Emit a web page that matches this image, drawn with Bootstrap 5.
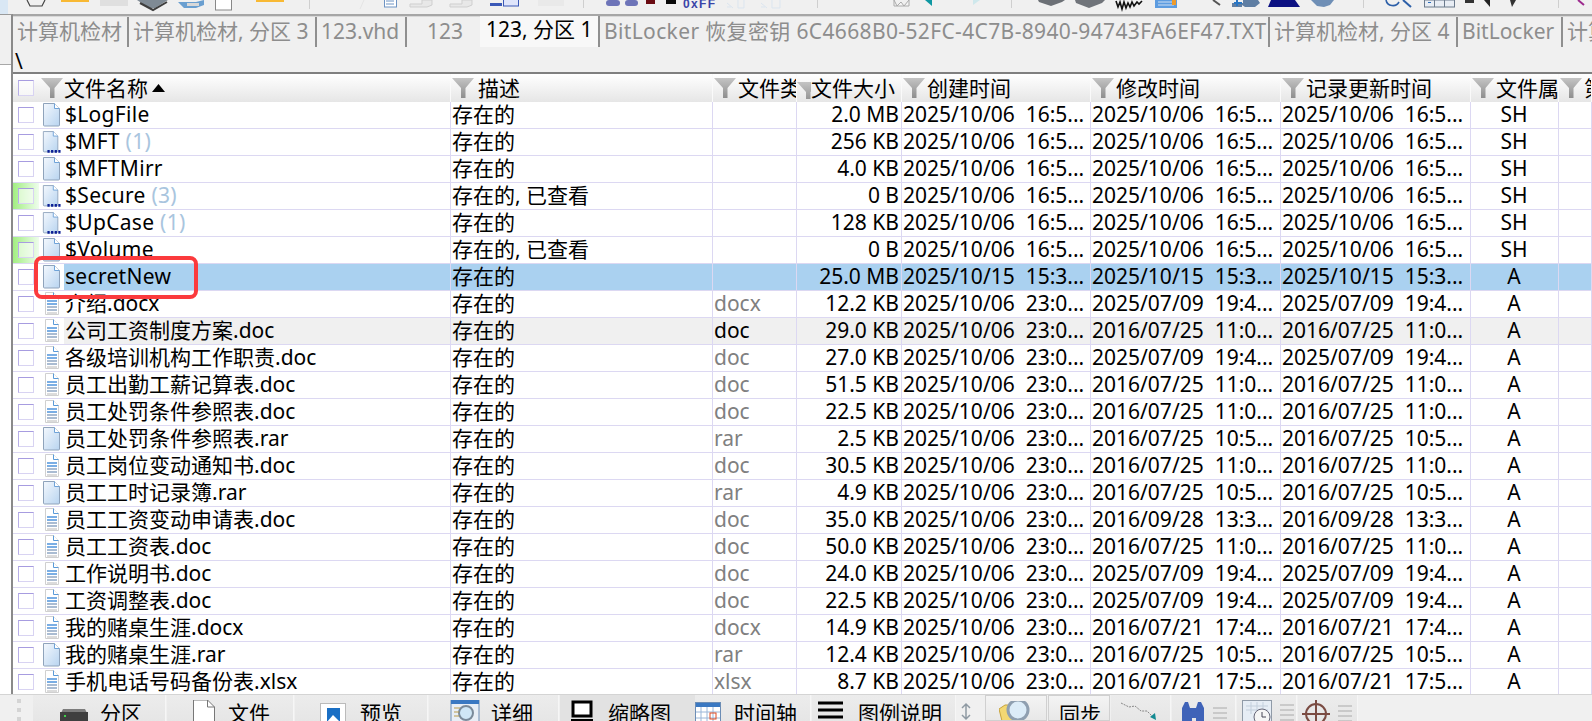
<!DOCTYPE html>
<html lang="zh"><head><meta charset="utf-8"><title>X-Ways</title>
<link href="https://cdn.jsdelivr.net/npm/bootstrap@5.3.0/dist/css/bootstrap.min.css" rel="stylesheet">
<style>
html,body{margin:0;height:721px;overflow:hidden}
body{background:#f0f0f0;font:21px/26px "Noto Sans","Noto Sans CJK SC",sans-serif;color:#000;width:1592px;position:relative}
.tool-strip{height:14px;overflow:hidden;background:#f0f0f0;flex:none}
.tool-strip svg{display:block}
.mid{height:680px;flex:none}
.rail{width:13px;flex:none;border-right:2px solid #8a8a8a;border-top:1px solid #9a9a9a;display:flex;flex-direction:column}
.rail-top{height:50px;background:#f0f0f0;border-bottom:1px solid #a8a8a8}
.rail-low{flex:1;background:#fff}
.main-col{width:1579px;flex:none;overflow:hidden}
.tabs-row{height:33px;border-top:2px solid #a6a6a6;position:relative;box-shadow:inset 0 1px 0 #d8d8d8;white-space:nowrap;overflow:hidden}
.tb{height:30px;margin-top:1px;color:#8d8d8d;line-height:29px;overflow:hidden;flex:none;text-align:left;border-right:2px solid #8f8f8f;padding-left:4px}
.tb1{width:116px}.tb2{width:188px}.tb3{width:90px}.tb4{width:73px;border-right:0;padding-left:20px}
.tb5{width:120px;color:#000;background:#f8f8f8;height:32px;margin-top:-1px;border-right:2px solid #8f8f8f;line-height:29px;padding-left:6px}
.tb6{width:670px;letter-spacing:.36px}.tb7{width:188px}.tb8{width:105px}.tb9{width:60px;border-right:0}
.path-row{height:25px;line-height:28px;padding-left:2px;flex:none}
.grid-wrap{height:623px;border-top:2px solid #7f7f7f;overflow:hidden;width:1579px;background:#fff}
table.ftable{table-layout:fixed;width:1579px;border-collapse:separate;border-spacing:0;margin:0}
.c1{width:438px}.c2{width:262px}.c3{width:84px}.c4{width:105px}.c5{width:189px}.c6{width:190px}.c7{width:190px}.c8{width:88px}.c9{width:33px}
table.ftable>thead>tr>th{height:28px;padding:0;font-weight:400;white-space:nowrap;overflow:hidden;background:linear-gradient(#fff,#e6e6e6);border-right:1px solid #fafafa;vertical-align:middle}
.th-in{height:28px;display:flex;align-items:center}
.fun{width:22px;height:22px;flex:none;margin:0 2px 0 1px}
th:nth-child(1) .fun{margin-right:1px}
th:nth-child(2) .fun{margin-right:4px}
.fun-clip{width:14px;flex:none;overflow:hidden;height:22px}
.fun-clip .fun{margin:0}
.sort-tri{width:13px;height:8px;margin-left:4px;flex:none}
.chk{width:16px;height:16px;flex:none;border:1px solid #b7aee8;border-top-color:#a79ce0;border-right-color:#d8d3f2;border-bottom-color:#d8d3f2;background:rgba(255,255,255,.55);display:block}
table.ftable>tbody>tr>td{height:27px;padding:0 2px 0 1px;border-bottom:1px solid #dcd8f2;border-right:1px solid #dcd8f2;background:#fff;white-space:pre;overflow:hidden;vertical-align:middle;line-height:25px}
table.ftable>tbody>tr>td.cell-name{padding:0}
.name-in{height:26px;display:flex;align-items:stretch}
.chk-box{width:26px;padding-left:5px;flex:none;display:flex;align-items:center}
.th-chk{width:27px;padding-left:5px;flex:none;display:flex;align-items:center}
.ico-box{width:25px;flex:none;padding-left:3px;display:flex;align-items:center}
.ico{width:19px;height:25px;display:block}
.nm{flex:1;padding-left:1px;overflow:hidden}
tbody tr:nth-child(-n+7) .nm{letter-spacing:.3px}
.cnt{color:#a9c5de}
.seen .chk-box{background:linear-gradient(90deg,#a2ee82,#effded)}
.ty{color:#808080}
table.ftable>tbody>tr.sel>td{background:#aad1f0}
table.ftable>tbody>tr.sel>td.cell-name{background:#fff}
tr.sel .nm{background:#aad1f0}
table.ftable>tbody>tr.hov>td{background:#f0f0f0}
table.ftable>tbody>tr.hov>td.cell-name{background:#fff}
tr.hov .nm{background:#f0f0f0}
tr.hov .ty{color:#000}
.red-box{position:absolute;left:34px;top:256px;width:164px;height:43px;border:4px solid #fb3a3d;border-radius:8px;pointer-events:none}
.bot{height:27px;overflow:hidden;background:#f0f0f0;flex:none;border-top:1px solid #d4d4d4;position:relative}
.grip{width:33px;flex:none;padding:4px 0 0 17px}
.grip i{display:block;width:4px;height:4px;background:#d4d4d4;margin-bottom:5px}
.bi{height:26px;flex:none;display:flex;background:linear-gradient(#ececec,#e6e6e6);border-right:1px solid #f6f6f6;margin-right:1px;line-height:26px;padding-top:5px;overflow:hidden}
.bi svg{flex:none;display:block}
.b1{width:133px;padding-left:27px;gap:12px}.b2{width:127px;padding-left:25px;gap:12px}.b3{width:133px;padding-left:25px;gap:14px}
.b4{width:130px;padding-left:21px;gap:11px}.b5{width:137px;padding-left:11px;gap:15px;background:#e2e2e2}
.b6{width:116px;padding-left:0;gap:13px;margin-left:-3px}.b7{width:144px;padding-left:6px;gap:15px}
.b8{width:28px;background:none;border:0;margin:0;padding-left:2px}
.b9{width:62px;padding-left:13px;background:linear-gradient(#f4f4f4,#e8e8e8);border:1px solid #d0d0d0;margin-top:0}
.b10{width:62px;padding-left:10px;background:linear-gradient(#f4f4f4,#e8e8e8);border:1px solid #d0d0d0;margin-left:0}
.b11{width:60px;padding-left:9px}.b12{width:64px;padding-left:6px}.b13{width:60px;padding-left:5px}.b14{width:60px;padding-left:2px}
</style></head><body class="d-flex flex-column">
<svg width="0" height="0" class="position-absolute"><defs>
<linearGradient id="pg" x1="0" y1="0" x2="1" y2="1"><stop offset="0" stop-color="#f4f8fd"/><stop offset="1" stop-color="#b8d4f0"/></linearGradient>
<linearGradient id="fg" x1="0" y1="0" x2="0" y2="1"><stop offset="0" stop-color="#c4c4c4"/><stop offset="1" stop-color="#8e8e8e"/></linearGradient>
<symbol id="page" viewBox="0 0 19 25"><path d="M1.500 1.500h11l5 5v16.500a1 1 0 0 1-1 1h-14a1 1 0 0 1-1-1z" fill="url(#pg)" stroke="#8fa3bb"/><path d="M12.500 1.500v5h5" fill="#fff" stroke="#6fa3d8"/></symbol>
<symbol id="pagex" viewBox="0 0 21 25"><path d="M1.500 1.500h11l5 5v16.500a1 1 0 0 1-1 1h-14a1 1 0 0 1-1-1z" fill="url(#pg)" stroke="#8fa3bb"/><path d="M12.500 1.500v5h5" fill="#fff" stroke="#6fa3d8"/><path d="M6 22h2.500v3H6zM10 22h2.500v3H10zM14 22h2.500v3H14zM18 22h2.500v3H18z" fill="#0a1e96"/></symbol>
<symbol id="doc" viewBox="0 0 19 25"><path d="M3.500 1.500h8l5 5v17h-13z" fill="#fff" stroke="#d0d0d0"/><path d="M11.500 1.500v5h5" fill="#fff" stroke="#5a9ad8"/><path d="M5 10h10M5 13h10" stroke="#4f94dc" stroke-width="1.300"/><path d="M5 16h10M5 19h10" stroke="#8ea6c4" stroke-width="1.300"/><path d="M5 22h10" stroke="#b8b8b8"/></symbol>
<symbol id="funnel" viewBox="0 0 22 22"><path d="M0 1h22L13.500 11v10h-4.500V11z" fill="url(#fg)"/></symbol>
</defs></svg>

<div class="tool-strip"><svg width="1592" height="14" viewBox="0 0 1592 14">
<rect width="8" height="14" fill="#d9e7f4"/>
<path d="M27 0l3 6h12l3-6M33 6h5" fill="none" stroke="#444" stroke-width="1.200"/>
<rect x="61" width="28" height="2" fill="#f8b934"/>
<rect x="100" width="28" height="6" fill="#dfdfdf"/>
<path d="M137 0l12 8h6l13-8z" fill="#7f8a94"/><path d="M140 3l13 7 14-8" fill="none" stroke="#3e3e3e" stroke-width="2"/>
<path d="M178 2h18l8-2v5l-8 3h-12z" fill="#6a9fd0"/><path d="M187 3h12v3h-12z" fill="#d8d8d8"/>
<rect x="215.500" y="-2" width="16" height="12" fill="#fff" stroke="#888"/>
<rect x="256" width="28" height="2" fill="#f8b934"/>
<path d="M309.500 0v9" stroke="#cfcfcf"/>
<path d="M360 9l4-9" stroke="#e4e4e4"/>
<rect x="384.500" y="-3" width="12" height="10" fill="#fff" stroke="#6d93c3"/>
<path d="M386 1h8M386 4h8" stroke="#6d93c3"/>
<path d="M410 4h12v-4h10v5l-5 2h-17z" fill="#e8e8e8" stroke="#cfcfcf"/>
<path d="M450 4h12v-4h10v5l-5 2h-17z" fill="#e8e8e8" stroke="#cfcfcf"/>
<rect x="490" y="3" width="12" height="3" fill="#3b59b7"/><rect x="503.500" y="-2" width="15" height="8" fill="#dfe5fb" stroke="#3b59b7"/>
<rect x="538" y="0" width="26" height="6" fill="#e9e9e9"/>
<path d="M583.500 0v8" stroke="#cfcfcf"/>
<rect x="606" width="14" height="6" rx="3" fill="#6d74b8"/><rect x="625" width="13" height="6" rx="3" fill="#6d74b8"/>
<rect x="646" width="9" height="4" fill="#6a0b12"/><rect x="666" width="10" height="4" fill="#090909"/>
<text x="683" y="8" font-size="12" font-weight="700" fill="#3a44a8" font-family="Liberation Sans" textLength="32">0xFF</text>
<path d="M727 3l6 5M727 7h4M738 0v8h6V0" stroke="#dbe5ef" fill="none"/>
<path d="M761 3l6 5M761 7h4M772 0v8h8V0" stroke="#dbe5ef" fill="none"/>
<path d="M817.500 0v8" stroke="#cfcfcf"/>
<path d="M894 0l3 6 4-4 3 4 5-6v6h-15z" fill="#f5f5f5" stroke="#aaa"/>
<path d="M925 0h7v6z" fill="#0e97a2"/><path d="M973 0h7l-7 5z" fill="#cfe8ec"/>
<path d="M1011.500 0v8" stroke="#cfcfcf"/>
<path d="M1038 0h27l-3 2-11 4-12-4z" fill="#6c7076"/><path d="M1075 0h30l-3 3-13 5-13-5z" fill="#70747a"/>
<path d="M1116 1l2 6 2-5 2 7 2-7 2 6 2-5 2 4 2-5 2 4 3-4 2 2 3-3" fill="none" stroke="#111" stroke-width="1.600"/>
<rect x="1155" y="0" width="22" height="8" fill="#5d9ce0"/><path d="M1158 2h16M1158 5h16" stroke="#cfe0f4"/><rect x="1172" width="4" height="5" fill="#ef9b2a"/>
<path d="M1213 0l7 5" stroke="#555" stroke-width="2"/>
<path d="M1232 3h11v-3h15l2 3-5 4h-10l-3-2v2h-10z" fill="#5f7ea3"/><path d="M1237 0v6M1234 3h8" stroke="#2876c4" stroke-width="2"/>
<path d="M1271 0h24l5 7h-32z" fill="#0c1182"/>
<path d="M1311 0h23l-4 5-6 2-7-1z" fill="#6f8fb6"/>
<path d="M1363.500 0v8" stroke="#cfcfcf"/>
<path d="M1386 0a7 7 0 0 0 13 2" fill="none" stroke="#2c5fa8" stroke-width="1.600"/><path d="M1403 0l8 7" stroke="#2c5fa8" stroke-width="2"/>
<rect x="1424.500" y="0" width="30" height="7" fill="#e8edf4" stroke="#6b7a8c"/><path d="M1434.500 0v7M1444.500 0v7" stroke="#6b7a8c"/><rect x="1428" y="2" width="3" height="1" fill="#2b6cb8"/>
<rect x="1465" width="9" height="3" fill="#333"/><path d="M1484 0h6v7z" fill="#222"/><path d="M1510 0h6l-4 7z" fill="#333"/>
<path d="M1558.500 0v8" stroke="#cfcfcf"/>
<path d="M1578 0l6 5" stroke="#9c2a8e" stroke-width="2"/>
</svg></div>

<div class="mid d-flex">
<div class="rail"><div class="rail-top"></div><div class="rail-low"></div></div>
<div class="main-col d-flex flex-column">
<nav class="tabs-row d-flex">
<div class="tb tb1">计算机检材</div><div class="tb tb2">计算机检材, 分区 3</div><div class="tb tb3">123.vhd</div><div class="tb tb4">123</div><div class="tb tb5">123, 分区 1</div><div class="tb tb6">BitLocker 恢复密钥 6C4668B0-52FC-4C7B-8940-94743FA6EF47.TXT</div><div class="tb tb7">计算机检材, 分区 4</div><div class="tb tb8">BitLocker</div><div class="tb tb9">计算机</div>
</nav>
<div class="path-row">\</div>
<div class="grid-wrap">
<table class="ftable">
<colgroup><col class="c1"><col class="c2"><col class="c3"><col class="c4"><col class="c5"><col class="c6"><col class="c7"><col class="c8"><col class="c9"></colgroup>
<thead><tr>
<th><div class="th-in"><span class="th-chk"><span class="chk"></span></span><svg class="fun"><use href="#funnel"/></svg>文件名称<svg class="sort-tri" viewBox="0 0 13 8"><path d="M6.500 0L13 8H0z"/></svg></div></th>
<th><div class="th-in"><svg class="fun"><use href="#funnel"/></svg>描述</div></th>
<th><div class="th-in"><svg class="fun"><use href="#funnel"/></svg>文件类</div></th>
<th><div class="th-in"><span class="fun-clip"><svg class="fun"><use href="#funnel"/></svg></span>文件大小</div></th>
<th><div class="th-in"><svg class="fun"><use href="#funnel"/></svg>创建时间</div></th>
<th><div class="th-in"><svg class="fun"><use href="#funnel"/></svg>修改时间</div></th>
<th><div class="th-in"><svg class="fun"><use href="#funnel"/></svg>记录更新时间</div></th>
<th><div class="th-in"><svg class="fun"><use href="#funnel"/></svg>文件属</div></th>
<th><div class="th-in"><svg class="fun"><use href="#funnel"/></svg>第</div></th>
</tr></thead>
<tbody>
<tr><td class="cell-name"><div class="name-in"><span class="chk-box"><span class="chk"></span></span><span class="ico-box"><svg class="ico"><use href="#page"/></svg></span><span class="nm">$LogFile</span></div></td><td>存在的</td><td class="ty"></td><td class="text-end">2.0 MB</td><td>2025/10/06  16:5...</td><td>2025/10/06  16:5...</td><td>2025/10/06  16:5...</td><td class="text-center">SH</td><td></td></tr>
<tr><td class="cell-name"><div class="name-in"><span class="chk-box"><span class="chk"></span></span><span class="ico-box"><svg class="ico"><use href="#pagex"/></svg></span><span class="nm">$MFT <span class="cnt">(1)</span></span></div></td><td>存在的</td><td class="ty"></td><td class="text-end">256 KB</td><td>2025/10/06  16:5...</td><td>2025/10/06  16:5...</td><td>2025/10/06  16:5...</td><td class="text-center">SH</td><td></td></tr>
<tr><td class="cell-name"><div class="name-in"><span class="chk-box"><span class="chk"></span></span><span class="ico-box"><svg class="ico"><use href="#page"/></svg></span><span class="nm">$MFTMirr</span></div></td><td>存在的</td><td class="ty"></td><td class="text-end">4.0 KB</td><td>2025/10/06  16:5...</td><td>2025/10/06  16:5...</td><td>2025/10/06  16:5...</td><td class="text-center">SH</td><td></td></tr>
<tr class="seen"><td class="cell-name"><div class="name-in"><span class="chk-box"><span class="chk"></span></span><span class="ico-box"><svg class="ico"><use href="#pagex"/></svg></span><span class="nm">$Secure <span class="cnt">(3)</span></span></div></td><td>存在的, 已查看</td><td class="ty"></td><td class="text-end">0 B</td><td>2025/10/06  16:5...</td><td>2025/10/06  16:5...</td><td>2025/10/06  16:5...</td><td class="text-center">SH</td><td></td></tr>
<tr><td class="cell-name"><div class="name-in"><span class="chk-box"><span class="chk"></span></span><span class="ico-box"><svg class="ico"><use href="#pagex"/></svg></span><span class="nm">$UpCase <span class="cnt">(1)</span></span></div></td><td>存在的</td><td class="ty"></td><td class="text-end">128 KB</td><td>2025/10/06  16:5...</td><td>2025/10/06  16:5...</td><td>2025/10/06  16:5...</td><td class="text-center">SH</td><td></td></tr>
<tr class="seen"><td class="cell-name"><div class="name-in"><span class="chk-box"><span class="chk"></span></span><span class="ico-box"><svg class="ico"><use href="#page"/></svg></span><span class="nm">$Volume</span></div></td><td>存在的, 已查看</td><td class="ty"></td><td class="text-end">0 B</td><td>2025/10/06  16:5...</td><td>2025/10/06  16:5...</td><td>2025/10/06  16:5...</td><td class="text-center">SH</td><td></td></tr>
<tr class="sel"><td class="cell-name"><div class="name-in"><span class="chk-box"><span class="chk"></span></span><span class="ico-box"><svg class="ico"><use href="#page"/></svg></span><span class="nm">secretNew</span></div></td><td>存在的</td><td class="ty"></td><td class="text-end">25.0 MB</td><td>2025/10/15  15:3...</td><td>2025/10/15  15:3...</td><td>2025/10/15  15:3...</td><td class="text-center">A</td><td></td></tr>
<tr><td class="cell-name"><div class="name-in"><span class="chk-box"><span class="chk"></span></span><span class="ico-box"><svg class="ico"><use href="#doc"/></svg></span><span class="nm">介绍.docx</span></div></td><td>存在的</td><td class="ty">docx</td><td class="text-end">12.2 KB</td><td>2025/10/06  23:0...</td><td>2025/07/09  19:4...</td><td>2025/07/09  19:4...</td><td class="text-center">A</td><td></td></tr>
<tr class="hov"><td class="cell-name"><div class="name-in"><span class="chk-box"><span class="chk"></span></span><span class="ico-box"><svg class="ico"><use href="#doc"/></svg></span><span class="nm">公司工资制度方案.doc</span></div></td><td>存在的</td><td class="ty">doc</td><td class="text-end">29.0 KB</td><td>2025/10/06  23:0...</td><td>2016/07/25  11:0...</td><td>2016/07/25  11:0...</td><td class="text-center">A</td><td></td></tr>
<tr><td class="cell-name"><div class="name-in"><span class="chk-box"><span class="chk"></span></span><span class="ico-box"><svg class="ico"><use href="#doc"/></svg></span><span class="nm">各级培训机构工作职责.doc</span></div></td><td>存在的</td><td class="ty">doc</td><td class="text-end">27.0 KB</td><td>2025/10/06  23:0...</td><td>2025/07/09  19:4...</td><td>2025/07/09  19:4...</td><td class="text-center">A</td><td></td></tr>
<tr><td class="cell-name"><div class="name-in"><span class="chk-box"><span class="chk"></span></span><span class="ico-box"><svg class="ico"><use href="#doc"/></svg></span><span class="nm">员工出勤工薪记算表.doc</span></div></td><td>存在的</td><td class="ty">doc</td><td class="text-end">51.5 KB</td><td>2025/10/06  23:0...</td><td>2016/07/25  11:0...</td><td>2016/07/25  11:0...</td><td class="text-center">A</td><td></td></tr>
<tr><td class="cell-name"><div class="name-in"><span class="chk-box"><span class="chk"></span></span><span class="ico-box"><svg class="ico"><use href="#doc"/></svg></span><span class="nm">员工处罚条件参照表.doc</span></div></td><td>存在的</td><td class="ty">doc</td><td class="text-end">22.5 KB</td><td>2025/10/06  23:0...</td><td>2016/07/25  11:0...</td><td>2016/07/25  11:0...</td><td class="text-center">A</td><td></td></tr>
<tr><td class="cell-name"><div class="name-in"><span class="chk-box"><span class="chk"></span></span><span class="ico-box"><svg class="ico"><use href="#page"/></svg></span><span class="nm">员工处罚条件参照表.rar</span></div></td><td>存在的</td><td class="ty">rar</td><td class="text-end">2.5 KB</td><td>2025/10/06  23:0...</td><td>2016/07/25  10:5...</td><td>2016/07/25  10:5...</td><td class="text-center">A</td><td></td></tr>
<tr><td class="cell-name"><div class="name-in"><span class="chk-box"><span class="chk"></span></span><span class="ico-box"><svg class="ico"><use href="#doc"/></svg></span><span class="nm">员工岗位变动通知书.doc</span></div></td><td>存在的</td><td class="ty">doc</td><td class="text-end">30.5 KB</td><td>2025/10/06  23:0...</td><td>2016/07/25  11:0...</td><td>2016/07/25  11:0...</td><td class="text-center">A</td><td></td></tr>
<tr><td class="cell-name"><div class="name-in"><span class="chk-box"><span class="chk"></span></span><span class="ico-box"><svg class="ico"><use href="#page"/></svg></span><span class="nm">员工工时记录簿.rar</span></div></td><td>存在的</td><td class="ty">rar</td><td class="text-end">4.9 KB</td><td>2025/10/06  23:0...</td><td>2016/07/25  10:5...</td><td>2016/07/25  10:5...</td><td class="text-center">A</td><td></td></tr>
<tr><td class="cell-name"><div class="name-in"><span class="chk-box"><span class="chk"></span></span><span class="ico-box"><svg class="ico"><use href="#doc"/></svg></span><span class="nm">员工工资变动申请表.doc</span></div></td><td>存在的</td><td class="ty">doc</td><td class="text-end">35.0 KB</td><td>2025/10/06  23:0...</td><td>2016/09/28  13:3...</td><td>2016/09/28  13:3...</td><td class="text-center">A</td><td></td></tr>
<tr><td class="cell-name"><div class="name-in"><span class="chk-box"><span class="chk"></span></span><span class="ico-box"><svg class="ico"><use href="#doc"/></svg></span><span class="nm">员工工资表.doc</span></div></td><td>存在的</td><td class="ty">doc</td><td class="text-end">50.0 KB</td><td>2025/10/06  23:0...</td><td>2016/07/25  11:0...</td><td>2016/07/25  11:0...</td><td class="text-center">A</td><td></td></tr>
<tr><td class="cell-name"><div class="name-in"><span class="chk-box"><span class="chk"></span></span><span class="ico-box"><svg class="ico"><use href="#doc"/></svg></span><span class="nm">工作说明书.doc</span></div></td><td>存在的</td><td class="ty">doc</td><td class="text-end">24.0 KB</td><td>2025/10/06  23:0...</td><td>2025/07/09  19:4...</td><td>2025/07/09  19:4...</td><td class="text-center">A</td><td></td></tr>
<tr><td class="cell-name"><div class="name-in"><span class="chk-box"><span class="chk"></span></span><span class="ico-box"><svg class="ico"><use href="#doc"/></svg></span><span class="nm">工资调整表.doc</span></div></td><td>存在的</td><td class="ty">doc</td><td class="text-end">22.5 KB</td><td>2025/10/06  23:0...</td><td>2025/07/09  19:4...</td><td>2025/07/09  19:4...</td><td class="text-center">A</td><td></td></tr>
<tr><td class="cell-name"><div class="name-in"><span class="chk-box"><span class="chk"></span></span><span class="ico-box"><svg class="ico"><use href="#doc"/></svg></span><span class="nm">我的赌桌生涯.docx</span></div></td><td>存在的</td><td class="ty">docx</td><td class="text-end">14.9 KB</td><td>2025/10/06  23:0...</td><td>2016/07/21  17:4...</td><td>2016/07/21  17:4...</td><td class="text-center">A</td><td></td></tr>
<tr><td class="cell-name"><div class="name-in"><span class="chk-box"><span class="chk"></span></span><span class="ico-box"><svg class="ico"><use href="#page"/></svg></span><span class="nm">我的赌桌生涯.rar</span></div></td><td>存在的</td><td class="ty">rar</td><td class="text-end">12.4 KB</td><td>2025/10/06  23:0...</td><td>2016/07/25  10:5...</td><td>2016/07/25  10:5...</td><td class="text-center">A</td><td></td></tr>
<tr><td class="cell-name"><div class="name-in"><span class="chk-box"><span class="chk"></span></span><span class="ico-box"><svg class="ico"><use href="#doc"/></svg></span><span class="nm">手机电话号码备份表.xlsx</span></div></td><td>存在的</td><td class="ty">xlsx</td><td class="text-end">8.7 KB</td><td>2025/10/06  23:0...</td><td>2016/07/21  17:5...</td><td>2016/07/21  17:5...</td><td class="text-center">A</td><td></td></tr>
</tbody></table>
</div>
</div></div>

<div class="bot d-flex">
<div class="grip"><i></i><i></i><i></i></div>
<div class="bi b1"><svg width="28" height="24" viewBox="0 0 28 24"><path d="M3 9h22l3 6v9H0v-9z" fill="#7c7c7c"/><rect y="12" width="28" height="12" fill="#3f3f3f"/><rect x="4" y="15" width="2" height="2" fill="#3fd04a"/></svg><span>分区</span></div>
<div class="bi b2"><svg width="24" height="24" viewBox="0 0 24 24"><path d="M1.500 0h14l7 7v17h-21z" fill="#fff" stroke="#777"/><path d="M15.500 0v7h7" fill="none" stroke="#777"/></svg><span>文件</span></div>
<div class="bi b3"><svg width="26" height="24" viewBox="0 0 26 24"><rect x=".5" y="3.500" width="25" height="20" fill="#fff" stroke="#bbb"/><rect x="7" y="8" width="13" height="14" fill="#1a6fc4"/><path d="M7 22l6-7 7 7z" fill="#fff"/></svg><span>预览</span></div>
<div class="bi b4"><svg width="30" height="24" viewBox="0 0 30 24"><rect x="1" y="0" width="28" height="24" fill="#e8eef6" stroke="#6c8db5"/><rect x="1" y="0" width="28" height="4" fill="#3a78c2"/><circle cx="16" cy="13" r="7" fill="#cfe6f6" stroke="#7a8a9a" stroke-width="2"/><path d="M4 8h6M4 12h5M4 16h5" stroke="#b89a4a"/></svg><span>详细</span></div>
<div class="bi b5"><svg width="22" height="24" viewBox="0 0 22 24"><rect x="2" y="2" width="18" height="14" fill="#fff" stroke="#000" stroke-width="3"/><rect x="0" y="19" width="22" height="5" fill="#000"/></svg><span>缩略图</span></div>
<div class="bi b6"><svg width="26" height="24" viewBox="0 0 26 24"><rect x=".5" y="2.500" width="25" height="21" fill="#fff" stroke="#6c8db5"/><rect x="1" y="3" width="24" height="4" fill="#3a78c2"/><path d="M6 7v16M12 7v16M18 7v16M1 12h24M1 18h24" stroke="#9ab6d8"/><rect x="15" y="13" width="6" height="6" fill="none" stroke="#e04a20"/></svg><span>时间轴</span></div>
<div class="bi b7"><svg width="25" height="24" viewBox="0 0 25 24"><path d="M0 3h25M0 10h25M0 17h25" stroke="#000" stroke-width="3"/></svg><span>图例说明</span></div>
<div class="bi b8"><svg width="14" height="24" viewBox="0 0 14 24"><path d="M7 4v15M3 8l4-4 4 4M3 15l4 4 4-4" fill="none" stroke="#8f9aa3" stroke-width="1.500"/></svg></div>
<div class="bi b9"><svg width="32" height="24" viewBox="0 0 32 24"><path d="M0 8l6-4h8v20H4z" fill="#f3d873" stroke="#c7a33c"/><circle cx="19" cy="9" r="10" fill="#dcecf8" stroke="#8f9fb0" stroke-width="3"/></svg></div>
<div class="bi b10"><span>同步</span></div>
<div class="bi b11"><svg width="38" height="22" viewBox="0 0 38 22"><path d="M1 3l8 4 6-1 6 5 6 0 7 7" fill="none" stroke="#888" stroke-dasharray="2 1"/><path d="M30 17l6 3-1-7z" fill="#148a92"/></svg></div>
<div class="bi b12"><svg width="52" height="24" viewBox="0 0 52 24"><path d="M4 24V8l3-6h3l2 6h6l2-6h3l3 6v16H18v-6h-4v6z" fill="#3f63b8"/><path d="M35 8h14M35 13h14M35 18h14M35 23h14" stroke="#aaa"/></svg></div>
<div class="bi b13"><svg width="54" height="24" viewBox="0 0 54 24"><rect x=".5" y=".5" width="29" height="24" fill="#e6edf5" stroke="#909ba8"/><path d="M4 6h22M4 10h22M9 2v12M15 2v12M21 2v12" stroke="#c3cfdc"/><circle cx="20" cy="17" r="8" fill="#f5f5f5" stroke="#667"/><path d="M20 17v-5M20 17h4" stroke="#445"/><path d="M38 5h14M38 10h14M38 15h14M38 20h14" stroke="#aaa"/></svg></div>
<div class="bi b14"><svg width="56" height="24" viewBox="0 0 56 24"><circle cx="16" cy="14" r="10" fill="none" stroke="#7a4b42" stroke-width="2"/><path d="M16 0v24M2 14h28" stroke="#7a4b42" stroke-width="2"/><path d="M38 6h14M38 11h14M38 16h14M38 21h14" stroke="#aaa"/></svg></div>
</div>
<div class="red-box"></div>
</body></html>
